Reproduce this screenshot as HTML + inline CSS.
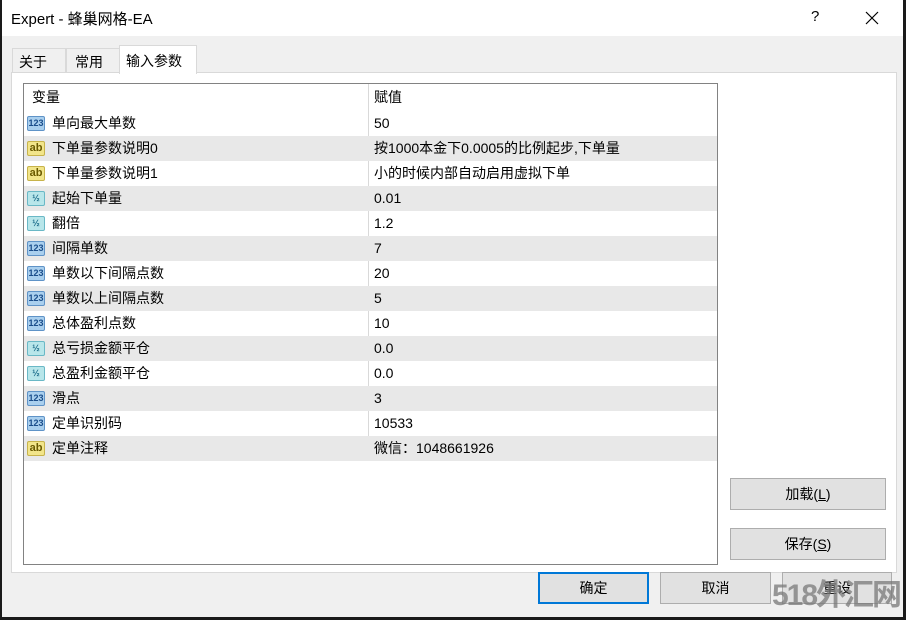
<!DOCTYPE html>
<html><head><meta charset="utf-8"><style>
*{margin:0;padding:0;box-sizing:border-box}
html,body{width:906px;height:620px;overflow:hidden}
body{background:#1a1a1a;position:relative;font-family:"Liberation Sans","Noto Sans CJK SC",sans-serif;font-size:14px;color:#000}
.win{position:absolute;left:2px;top:0;width:901px;height:617px;background:#f0f0f0}
.title{position:absolute;left:0;top:0;width:901px;height:36px;background:#fff}
.title span{position:absolute;left:9px;top:8px;font-size:15px}
.q{position:absolute;left:809px;top:8px;font-size:15px}
.tab{position:absolute;top:48px;height:25px;border:1px solid #d9d9d9;border-bottom:none;background:#f0f0f0;padding:3px 0 0 6px}
.panel{position:absolute;left:9px;top:72px;width:886px;height:501px;background:#fff;border:1px solid #d9d9d9}
.list{position:absolute;left:23px;top:83px;width:695px;height:482px;border:1px solid #828282;background:#fff}
.row{position:absolute;left:0;width:693px;height:25px;line-height:25px}
.row.g{background:#e8e8e8}
.row .n{position:absolute;left:28px;top:0}
.row .v{position:absolute;left:350px;top:0}
.ic{position:absolute;left:3px;top:5px;width:18px;height:15px;border-radius:2px;font-size:9px;font-weight:bold;text-align:center;line-height:13px}
.i1{background:#a9cfee;color:#1a4d8a;border:1px solid #5f93c7}
.i2{background:#f2e58a;color:#6a5a00;border:1px solid #c7b34a;font-size:11px}
.i3{background:#b8e6ea;color:#1b6c8a;border:1px solid #6ab8c6}
.div{position:absolute;left:344px;top:0;width:1px;height:376px;background:#d9d9d9}
.btn{position:absolute;height:32px;background:#e1e1e1;border:1px solid #adadad;text-align:center;line-height:30px}
</style></head><body>
<div class="win">
<div class="title"><span>Expert - 蜂巢网格-EA</span><div class="q">?</div>
<svg width="16" height="16" viewBox="0 0 16 16" style="position:absolute;left:862px;top:10px"><path d="M2 2L14 14M14 2L2 14" stroke="#000" stroke-width="1.2"/></svg></div>
<div class="tab" style="left:10px;width:54px">关于</div>
<div class="tab" style="left:64px;width:54px;padding-left:8px">常用</div>
<div class="tab" style="left:117px;top:45px;height:29px;width:78px;background:#fff;padding-top:5px;z-index:2">输入参数</div>
<div class="panel"></div>
</div>
<div class="list">
<div class="div"></div>
<div class="row" style="top:1px"><span class="n" style="left:8px">变量</span><span class="v">赋值</span></div>
<div class="row" style="top:27px"><div class="ic i1">123</div><span class="n">单向最大单数</span><span class="v">50</span></div>
<div class="row g" style="top:52px"><div class="ic i2">ab</div><span class="n">下单量参数说明0</span><span class="v">按1000本金下0.0005的比例起步,下单量</span></div>
<div class="row" style="top:77px"><div class="ic i2">ab</div><span class="n">下单量参数说明1</span><span class="v">小的时候内部自动启用虚拟下单</span></div>
<div class="row g" style="top:102px"><div class="ic i3">½</div><span class="n">起始下单量</span><span class="v">0.01</span></div>
<div class="row" style="top:127px"><div class="ic i3">½</div><span class="n">翻倍</span><span class="v">1.2</span></div>
<div class="row g" style="top:152px"><div class="ic i1">123</div><span class="n">间隔单数</span><span class="v">7</span></div>
<div class="row" style="top:177px"><div class="ic i1">123</div><span class="n">单数以下间隔点数</span><span class="v">20</span></div>
<div class="row g" style="top:202px"><div class="ic i1">123</div><span class="n">单数以上间隔点数</span><span class="v">5</span></div>
<div class="row" style="top:227px"><div class="ic i1">123</div><span class="n">总体盈利点数</span><span class="v">10</span></div>
<div class="row g" style="top:252px"><div class="ic i3">½</div><span class="n">总亏损金额平仓</span><span class="v">0.0</span></div>
<div class="row" style="top:277px"><div class="ic i3">½</div><span class="n">总盈利金额平仓</span><span class="v">0.0</span></div>
<div class="row g" style="top:302px"><div class="ic i1">123</div><span class="n">滑点</span><span class="v">3</span></div>
<div class="row" style="top:327px"><div class="ic i1">123</div><span class="n">定单识别码</span><span class="v">10533</span></div>
<div class="row g" style="top:352px"><div class="ic i2">ab</div><span class="n">定单注释</span><span class="v">微信：1048661926</span></div>
</div>
<div class="btn" style="left:730px;top:478px;width:156px">加载(<u>L</u>)</div>
<div class="btn" style="left:730px;top:528px;width:156px">保存(<u>S</u>)</div>
<div class="btn" style="left:538px;top:572px;width:111px;border:2px solid #0078d7;line-height:28px">确定</div>
<div class="btn" style="left:660px;top:572px;width:111px">取消</div>
<div class="btn" style="left:782px;top:572px;width:110px">重设</div>
<div style="position:absolute;left:772px;top:578px;font-size:30px;font-weight:bold;color:rgba(120,120,120,0.75);letter-spacing:-2px;white-space:nowrap;line-height:36px">518外汇网</div>
</body></html>
